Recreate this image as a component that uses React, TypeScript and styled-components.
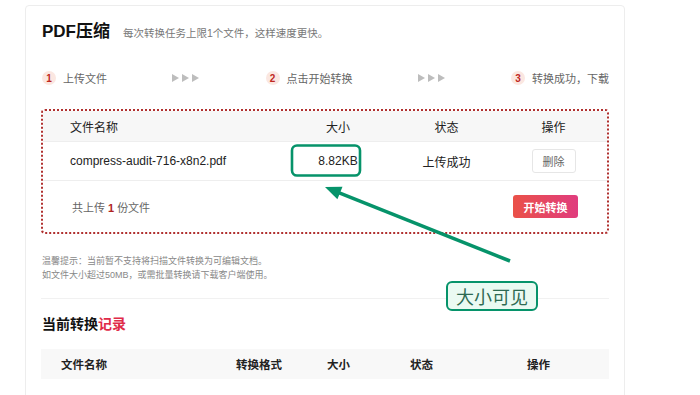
import React from 'react'
import styled, { createGlobalStyle } from 'styled-components'

const GlobalStyle = createGlobalStyle`
  body {
    margin: 0;
    background: #fff;
    font-family: "Liberation Sans", "Noto Sans CJK SC", sans-serif;
    color: #333;
  }
`

const green = '#06936a'

const Page = styled.div`
  position: relative;
  width: 700px;
  height: 395px;
  overflow: hidden;
  padding: 5px 0 0 25px;
  box-sizing: border-box;
`
const Card = styled.div`
  width: 600px;
  min-height: 420px;
  box-sizing: border-box;
  border: 1px solid #ededed;
  border-radius: 4px;
  padding: 15px 15px 0;
`
const TitleRow = styled.div`
  display: flex;
  align-items: baseline;
  gap: 13px;
  padding-left: 1px;
  line-height: 22px;
`
const Title = styled.h1`
  margin: 0;
  font-size: 17px;
  font-weight: 700;
  color: #111;
`
const Subtitle = styled.span`
  font-size: 10.5px;
  color: #777;
`
const Steps = styled.div`
  display: flex;
  align-items: center;
  justify-content: space-between;
  height: 20px;
  margin-top: 24px;
  padding-left: 1px;
`
const Step = styled.div`
  display: flex;
  align-items: center;
  gap: 7px;
`
const StepNum = styled.span`
  width: 14px;
  height: 14px;
  border-radius: 50%;
  background: #fbe7e1;
  color: #c0281f;
  font-size: 10px;
  font-weight: 700;
  display: flex;
  align-items: center;
  justify-content: center;
`
const StepLabel = styled.span`
  font-size: 11px;
  color: #666;
  white-space: nowrap;
`
const UploadBox = styled.div`
  margin-top: 21px;
  border: 2px dotted #b0302f;
  border-radius: 4px;
`
const Row = styled.div<{ $head?: boolean; $h: number }>`
  display: grid;
  grid-template-columns: 240px 110px 107px 1fr;
  align-items: center;
  height: ${(p) => p.$h}px;
  font-size: 12px;
  color: #222;
  background: ${(p) => (p.$head ? '#f7f7f7' : '#fff')};
  border-top: ${(p) => (p.$head ? 'none' : '1px solid #eeeeee')};
`
const Cell = styled.div<{ $center?: boolean }>`
  text-align: ${(p) => (p.$center ? 'center' : 'left')};
  padding-left: ${(p) => (p.$center ? '0' : '27px')};
`
const GhostBtn = styled.button`
  width: 44px;
  height: 24px;
  border: 1px solid #e6e6e6;
  border-radius: 3px;
  background: #fff;
  font-family: inherit;
  font-size: 11px;
  color: #666;
  padding: 0;
`
const Footer = styled.div`
  display: flex;
  align-items: center;
  justify-content: space-between;
  height: 51px;
  border-top: 1px solid #eeeeee;
  padding: 0 29px 0 29px;
`
const Count = styled.span`
  font-size: 11px;
  color: #666;
  b {
    color: #b0241e;
    margin: 0 3px;
  }
`
const StartBtn = styled.button`
  width: 65px;
  height: 23px;
  border: none;
  border-radius: 3px;
  background: linear-gradient(90deg, #ea5148, #e03c7e);
  color: #fff;
  font-family: inherit;
  font-size: 11px;
  font-weight: 700;
  padding: 0;
`
const Tips = styled.p`
  margin: 20px 0 0 1px;
  font-size: 9px;
  line-height: 14px;
  color: #888;
`
const Divider = styled.hr`
  margin: 16px 0 0;
  border: none;
  border-top: 1px solid #f1f1f1;
`
const SectionTitle = styled.h2`
  margin: 15px 0 0 1px;
  font-size: 14px;
  line-height: 20px;
  font-weight: 700;
  color: #111;
  span {
    color: #e02a48;
  }
`
const RecordHead = styled.div`
  display: grid;
  grid-template-columns: 175px 91px 83px 117px 1fr;
  align-items: center;
  height: 30px;
  margin-top: 15px;
  padding-left: 20px;
  font-size: 11.5px;
  font-weight: 700;
  color: #222;
  background: #f8f8f8;
`
const Overlay = styled.svg`
  position: absolute;
  left: 0;
  top: 0;
  pointer-events: none;
`
const Callout = styled.div`
  position: absolute;
  left: 446px;
  top: 281px;
  width: 92px;
  height: 30px;
  box-sizing: border-box;
  border: 2px solid ${green};
  border-radius: 6px;
  background: #eafaf2;
  color: #2e6a52;
  font-size: 18px;
  display: flex;
  align-items: center;
  justify-content: center;
`

const Arrows: React.FC = () => (
  <svg width="28" height="8" viewBox="0 0 28 8">
    {[0, 10, 20].map((x) => (
      <polygon key={x} points={`${x},0 ${x + 7},4 ${x},8`} fill="#bdbdbd" />
    ))}
  </svg>
)

export default function App() {
  return (
    <Page>
      <GlobalStyle />
      <Card>
        <TitleRow>
          <Title>PDF压缩</Title>
          <Subtitle>每次转换任务上限1个文件，这样速度更快。</Subtitle>
        </TitleRow>
        <Steps>
          <Step>
            <StepNum>1</StepNum>
            <StepLabel>上传文件</StepLabel>
          </Step>
          <Arrows />
          <Step>
            <StepNum>2</StepNum>
            <StepLabel>点击开始转换</StepLabel>
          </Step>
          <Arrows />
          <Step>
            <StepNum>3</StepNum>
            <StepLabel>转换成功，下载</StepLabel>
          </Step>
        </Steps>
        <UploadBox>
          <Row $head $h={30}>
            <Cell>文件名称</Cell>
            <Cell $center>大小</Cell>
            <Cell $center>状态</Cell>
            <Cell $center>操作</Cell>
          </Row>
          <Row $h={38}>
            <Cell>compress-audit-716-x8n2.pdf</Cell>
            <Cell $center>8.82KB</Cell>
            <Cell $center>上传成功</Cell>
            <Cell $center>
              <GhostBtn>删除</GhostBtn>
            </Cell>
          </Row>
          <Footer>
            <Count>
              共上传<b>1</b>份文件
            </Count>
            <StartBtn>开始转换</StartBtn>
          </Footer>
        </UploadBox>
        <Tips>
          温馨提示：当前暂不支持将扫描文件转换为可编辑文档。
          <br />
          如文件大小超过50MB，或需批量转换请下载客户端使用。
        </Tips>
        <Divider />
        <SectionTitle>
          当前转换<span>记录</span>
        </SectionTitle>
        <RecordHead>
          <div>文件名称</div>
          <div>转换格式</div>
          <div>大小</div>
          <div>状态</div>
          <div>操作</div>
        </RecordHead>
      </Card>

      <Overlay width="700" height="395" viewBox="0 0 700 395">
        <rect x="292" y="145.5" width="68" height="30" rx="5" fill="none" stroke={green} strokeWidth="2.6" />
        <line x1="510" y1="261" x2="338" y2="192.3" stroke={green} strokeWidth="3.5" />
        <polygon points="325,187 342.5,186.7 337.4,199.3" fill={green} />
      </Overlay>
      <Callout>大小可见</Callout>
    </Page>
  )
}
